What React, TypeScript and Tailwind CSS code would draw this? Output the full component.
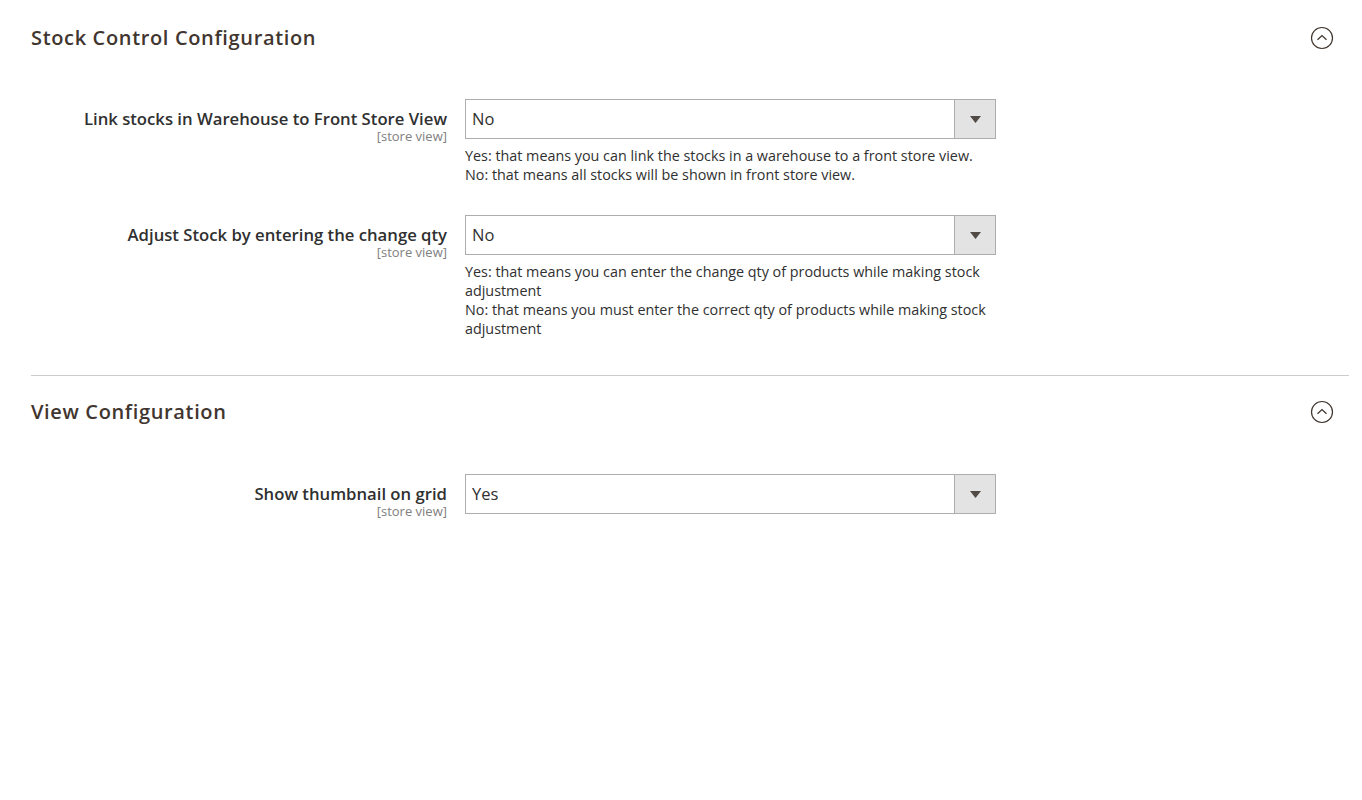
const font = { fontFamily: '"Open Sans", "Noto Sans", sans-serif' };

function CollapseIcon() {
  return (
    <svg width="24" height="24" viewBox="0 0 24 24" fill="none">
      <circle cx="12" cy="12" r="10.5" stroke="#41362f" strokeWidth="1.2" />
      <path d="M7.5 13.8 L12 9.6 L16.5 13.8" stroke="#41362f" strokeWidth="1.3" fill="none" />
    </svg>
  );
}

function Select({ value }: { value: string }) {
  return (
    <div className="flex h-[40px] w-[531px] border border-[#adadad] bg-white">
      <div className="flex flex-1 items-center pl-[6px] text-[16.5px] text-[#303030]">{value}</div>
      <div className="flex w-[41px] items-center justify-center border-l border-[#adadad] bg-[#e3e3e3]">
        <svg width="11" height="7" viewBox="0 0 11 7">
          <path d="M0 0 H11 L5.5 7 Z" fill="#514943" />
        </svg>
      </div>
    </div>
  );
}

function Field({ label, value, notes }: { label: string; value: string; notes?: string[] }) {
  return (
    <div className="flex gap-[18px]">
      <div className="flex w-[416px] flex-col items-end pt-[8px]">
        <span className="text-[16.7px] font-semibold leading-[23px] text-[#303030]">{label}</span>
        <span className="text-[13px] leading-[13px] text-[#808080]">[store view]</span>
      </div>
      <div className="flex flex-col">
        <Select value={value} />
        {notes && (
          <div className="mt-[7px] w-[531px] text-[14.35px] leading-[19px] text-[#303030]">
            {notes.map((n) => (
              <p key={n}>{n}</p>
            ))}
          </div>
        )}
      </div>
    </div>
  );
}

function SectionHeader({ title }: { title: string }) {
  return (
    <div className="flex items-center justify-between pr-[15px]">
      <h2 className="text-[20px] font-semibold leading-[28px] tracking-[0.65px] text-[#41362f]">{title}</h2>
      <CollapseIcon />
    </div>
  );
}

export default function App() {
  return (
    <div className="min-h-screen bg-white pl-[31px] pr-[13px]" style={font}>
      <section className="pt-[24px] pb-[37px]">
        <SectionHeader title="Stock Control Configuration" />
        <div className="mt-[47px] flex flex-col gap-[31px]">
          <Field
            label="Link stocks in Warehouse to Front Store View"
            value="No"
            notes={[
              "Yes: that means you can link the stocks in a warehouse to a front store view.",
              "No: that means all stocks will be shown in front store view.",
            ]}
          />
          <Field
            label="Adjust Stock by entering the change qty"
            value="No"
            notes={[
              "Yes: that means you can enter the change qty of products while making stock adjustment",
              "No: that means you must enter the correct qty of products while making stock adjustment",
            ]}
          />
        </div>
      </section>
      <section className="border-t border-[#cccccc] pt-[22px]">
        <SectionHeader title="View Configuration" />
        <div className="mt-[48px] flex flex-col">
          <Field label="Show thumbnail on grid" value="Yes" />
        </div>
      </section>
    </div>
  );
}
